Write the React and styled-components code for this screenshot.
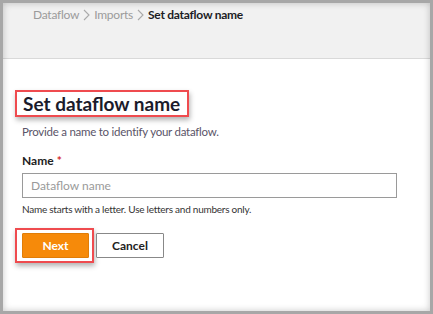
import React from "react";
import styled, { createGlobalStyle } from "styled-components";

const Global = createGlobalStyle`
  html, body { margin: 0; padding: 0; background: #a7a7a7; }
  * { box-sizing: border-box; }
  body { font-family: Lato, "Open Sans", sans-serif; }
`;

const Frame = styled.div`
  width: 433px;
  height: 314px;
  border: 3px solid #a7a7a7;
  background: #fff;
  display: flex;
  flex-direction: column;
  position: relative;
  overflow: hidden;
  &::after {
    content: "";
    position: absolute;
    inset: 0;
    box-shadow: inset 0 0 7px rgba(0, 0, 0, 0.22);
    pointer-events: none;
  }
`;

const Header = styled.div`
  height: 56px;
  background: #f1f1f1;
  border-bottom: 1px solid #d9d9d9;
  padding: 4px 0 0 30px;
`;

const Crumbs = styled.nav`
  display: flex;
  align-items: center;
  gap: 4px;
  font-size: 12px;
  line-height: 16px;
  letter-spacing: -0.25px;
`;

const Crumb = styled.span`
  color: ${(p) => (p.$current ? "#1c1c24" : "#9b9b9b")};
  font-weight: ${(p) => (p.$current ? 700 : 400)};
`;

const Chevron = () => (
  <svg width="7" height="12" viewBox="0 0 7 12" fill="none">
    <path d="M1 1 L6 6 L1 11" stroke="#a9a9a9" strokeWidth="1.1" />
  </svg>
);

const Content = styled.main`
  flex: 1;
  padding: 31px 0 0 12px;
  display: flex;
  flex-direction: column;
`;

const Highlight = styled.div`
  align-self: flex-start;
  border: 2px solid #ef4b4f;
  box-shadow: 1px 3px 5px rgba(0, 0, 0, 0.3);
  padding: ${(p) => p.$pad};
  display: flex;
`;

const Title = styled.h1`
  margin: 0;
  font-size: 19px;
  line-height: 23px;
  font-weight: 700;
  color: #1b1b2b;
`;

const Section = styled.div`
  padding-left: 7px;
  display: flex;
  flex-direction: column;
`;

const Subtitle = styled.p`
  margin: 7px 0 0;
  font-size: 11.5px;
  line-height: 16px;
  letter-spacing: -0.25px;
  color: #5a5468;
`;

const Label = styled.label`
  margin-top: 13px;
  font-size: 12px;
  line-height: 16px;
  font-weight: 700;
  color: #222;
`;

const Req = styled.span`
  color: #d42a2a;
  margin-left: 3px;
`;

const Input = styled.input`
  margin-top: 4px;
  width: 375px;
  height: 25px;
  border: 1px solid #9a9a9a;
  border-radius: 0;
  padding: 0 8px;
  font-family: inherit;
  font-size: 12px;
  color: #222;
  outline: none;
  &::placeholder { color: #9a9a9a; }
`;

const Help = styled.div`
  margin-top: 4px;
  font-size: 10px;
  line-height: 14px;
  letter-spacing: -0.25px;
  color: #333;
`;

const Actions = styled.div`
  margin-top: 12px;
  display: flex;
  align-items: center;
  gap: 2px;
`;

const Button = styled.button`
  width: ${(p) => p.$w}px;
  height: 25px;
  font-family: inherit;
  font-size: 12px;
  font-weight: 700;
  border-radius: 1px;
  cursor: pointer;
  background: ${(p) => (p.$primary ? "#f68a0a" : "#fff")};
  color: ${(p) => (p.$primary ? "#fff" : "#222")};
  border: 1px solid ${(p) => (p.$primary ? "#e07d08" : "#888")};
`;

export default function App() {
  return (
    <>
      <Global />
      <Frame>
        <Header>
          <Crumbs>
            <Crumb>Dataflow</Crumb>
            <Chevron />
            <Crumb>Imports</Crumb>
            <Chevron />
            <Crumb $current>Set dataflow name</Crumb>
          </Crumbs>
        </Header>
        <Content>
          <Highlight $pad="0 7px 0 6px">
            <Title>Set dataflow name</Title>
          </Highlight>
          <Section>
            <Subtitle>Provide a name to identify your dataflow.</Subtitle>
            <Label>
              Name<Req>*</Req>
            </Label>
            <Input placeholder="Dataflow name" />
            <Help>Name starts with a letter. Use letters and numbers only.</Help>
          </Section>
          <Actions>
            <Highlight $pad="3px 3px 3px 5px">
              <Button $primary $w={67}>Next</Button>
            </Highlight>
            <Button $w={68}>Cancel</Button>
          </Actions>
        </Content>
      </Frame>
    </>
  );
}
